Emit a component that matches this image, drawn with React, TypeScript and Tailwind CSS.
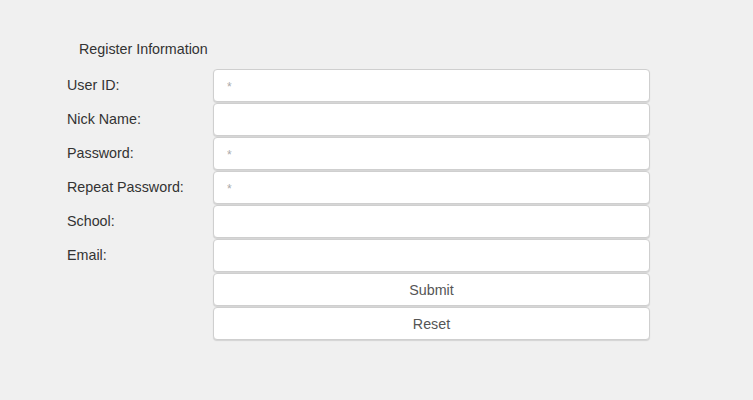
import React from "react";

const fields = [
  { label: "User ID:", placeholder: "*", type: "text" },
  { label: "Nick Name:", placeholder: "", type: "text" },
  { label: "Password:", placeholder: "*", type: "password" },
  { label: "Repeat Password:", placeholder: "*", type: "password" },
  { label: "School:", placeholder: "", type: "text" },
  { label: "Email:", placeholder: "", type: "text" },
];

export default function App() {
  return (
    <div
      className="min-h-[400px] w-full bg-[#f0f0f0] text-[#333] text-[14.3px]"
      style={{ fontFamily: '"Liberation Sans", Arial, sans-serif' }}
    >
      <div className="pl-[67px] pt-[41px]">
        <div className="pl-[12px] h-[17px] leading-[17px] mb-[11px]">Register Information</div>
        <form className="flex flex-col">
          {fields.map((f) => (
            <div key={f.label} className="flex items-start h-[34px]">
              <label className="w-[146px] leading-[33px]">{f.label}</label>
              <input
                type={f.type}
                placeholder={f.placeholder}
                className="w-[437px] h-[33px] bg-white border border-[#cfcfcf] rounded-[4px] shadow-[0_1px_1px_rgba(0,0,0,0.12)] px-[13px] text-[14px] outline-none placeholder:text-[#aaa] placeholder:text-[12px]"
              />
            </div>
          ))}
          {["Submit", "Reset"].map((b) => (
            <div key={b} className="flex items-start h-[34px]">
              <div className="w-[146px]" />
              <button
                type="button"
                className="w-[437px] h-[33px] pt-[3px] bg-white border border-[#cfcfcf] rounded-[4px] shadow-[0_1px_1px_rgba(0,0,0,0.12)] text-[14.3px] text-[#555]"
              >
                {b}
              </button>
            </div>
          ))}
        </form>
      </div>
    </div>
  );
}
